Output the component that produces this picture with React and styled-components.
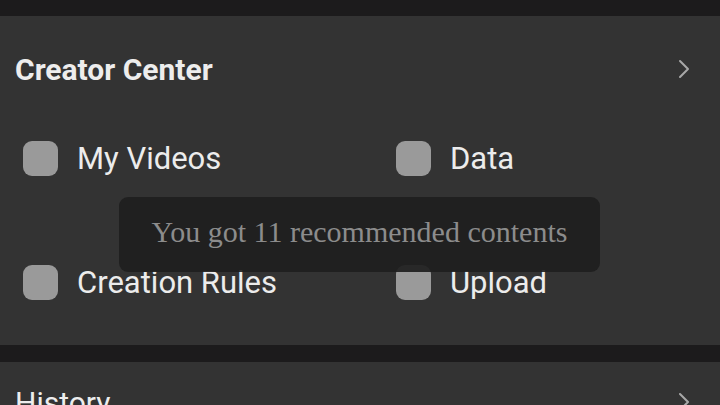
import React from 'react';
import styled, { createGlobalStyle } from 'styled-components';

const Global = createGlobalStyle`
  html, body { margin: 0; padding: 0; background: #1c1b1c; }
  body { width: 720px; height: 405px; overflow: hidden; font-family: Roboto, "Liberation Sans", sans-serif; }
`;

const Page = styled.div`
  display: flex;
  flex-direction: column;
  gap: 17px;
  padding-top: 16px;
`;

const Card = styled.section`
  position: relative;
  flex: none;
  background: #333333;
  height: ${p => p.$h || 'auto'};
  box-sizing: border-box;
`;

const Header = styled.div`
  display: flex;
  align-items: center;
  justify-content: space-between;
  height: ${p => p.$h || '106px'};
  padding: 0 30px 0 15px;
`;

const Title = styled.h2`
  margin: 0;
  font-size: 30px;
  font-weight: ${p => (p.$bold ? 700 : 400)};
  color: #ededed;
`;

const Grid = styled.div`
  display: grid;
  grid-template-columns: 373px 1fr;
  row-gap: 89px;
  padding: 19px 0 0 23px;
`;

const Item = styled.div`
  display: flex;
  align-items: center;
  gap: 19px;
  height: 35px;
`;

const Box = styled.span`
  width: 35px;
  height: 35px;
  border-radius: 9px;
  background: #9a9a9a;
  flex: none;
`;

const Label = styled.span`
  font-size: 31px;
  color: #ececec;
`;

const Toast = styled.div`
  position: absolute;
  left: 119px;
  top: 181px;
  width: 481px;
  height: 75px;
  padding-bottom: 5px;
  box-sizing: border-box;
  border-radius: 9px;
  background: rgba(30, 30, 30, 0.92);
  display: flex;
  align-items: center;
  justify-content: center;
  font-family: "Liberation Serif", "DejaVu Serif", serif;
  font-size: 30px;
  color: #8c8c8c;
`;

const Chevron = () => (
  <svg width="12" height="20" viewBox="0 0 12 20">
    <path d="M2 2 L10 10 L2 18" fill="none" stroke="#a8a8a8" strokeWidth="2" strokeLinecap="round" strokeLinejoin="round" />
  </svg>
);

const items = ['My Videos', 'Data', 'Creation Rules', 'Upload'];

export default function App() {
  return (
    <>
      <Global />
      <Page>
        <Card $h="329px">
          <Header>
            <Title $bold>Creator Center</Title>
            <Chevron />
          </Header>
          <Grid>
            {items.map(t => (
              <Item key={t}>
                <Box />
                <Label>{t}</Label>
              </Item>
            ))}
          </Grid>
          <Toast>You got 11 recommended contents</Toast>
        </Card>
        <Card $h="100px">
          <Header $h="80px">
            <Title>History</Title>
            <Chevron />
          </Header>
        </Card>
      </Page>
    </>
  );
}
